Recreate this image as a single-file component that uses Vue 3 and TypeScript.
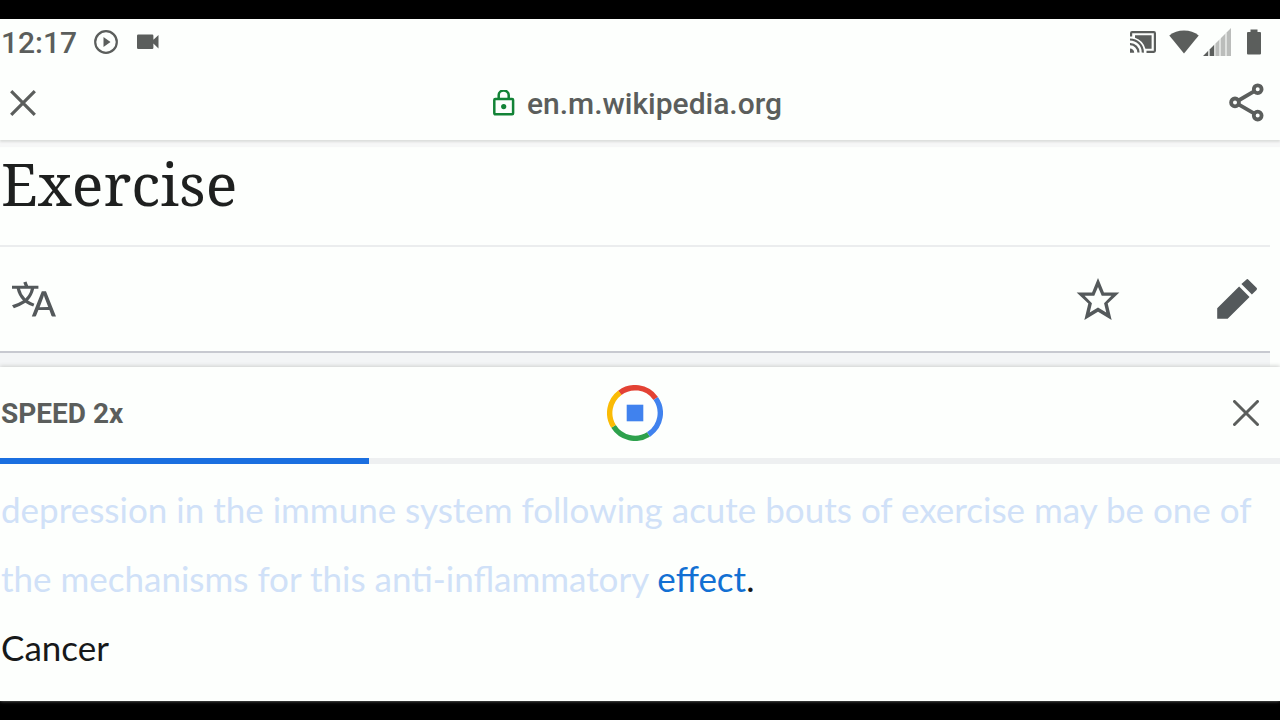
<script setup lang="ts">
import { computed, ref } from 'vue'

interface Arc {
  color: string
  start: number
  length: number
}

const clock = '12:17'
const host = 'en.m.wikipedia.org'
const speeds = [1, 1.5, 2]
const speed = ref(2)
const elapsed = ref(288)
const duration = 1000

const progress = computed(() => (elapsed.value / duration) * 100)

const arcs: Arc[] = [
  { color: '#e34234', start: -127, length: 92 },
  { color: '#4082ee', start: -35, length: 93 },
  { color: '#2da14c', start: 58, length: 90 },
  { color: '#fabb05', start: 148, length: 85 },
]

function nextSpeed() {
  speed.value = speeds[(speeds.indexOf(speed.value) + 1) % speeds.length]
}
</script>

<template>
  <div class="screen">
    <div class="status">
      <span class="clock">{{ clock }}</span>
      <svg class="s-play" width="26" height="26" viewBox="0 0 26 26" aria-hidden="true">
        <circle cx="13" cy="13" r="10.8" fill="none" stroke="currentColor" stroke-width="2.2" />
        <path d="M10.5 8v10l7-5z" fill="currentColor" />
      </svg>
      <svg class="s-cam" width="22" height="16" viewBox="0 0 22 16" aria-hidden="true">
        <path d="M1.2.5h14a1.2 1.2 0 0 1 1.2 1.2v4.1L21.5 1v13.500l-5.100-5v4.300a1.200 1.200 0 0 1-1.200 1.200h-14A1.200 1.200 0 0 1 0 13.800V1.700A1.200 1.200 0 0 1 1.200.5z" fill="currentColor" />
      </svg>
      <span class="grow"></span>
      <svg class="s-cast" width="28" height="24" viewBox="0 0 28 24" aria-hidden="true">
        <g fill="none" stroke="currentColor" stroke-width="2.200">
          <path d="M2.100 6.500V3.200a1 1 0 0 1 1-1h21.800a1 1 0 0 1 1 1v17.600a1 1 0 0 1-1 1H17.500" />
          <path d="M1 9.500A12.800 12.800 0 0 1 13.800 22.600M1 14.200a8.300 8.300 0 0 1 8.500 8.400" />
        </g>
        <path d="M6 5.200h16.600v13.600h-6.200A16 16 0 0 0 6 7.800zM1 18.600a4.200 4.200 0 0 1 4.200 4.200H1z" fill="currentColor" />
      </svg>
      <svg class="s-wifi" width="30" height="24" viewBox="0 0 30 24" aria-hidden="true">
        <path d="M15 23.500.3 5.600Q6.500.500 15 .500t14.700 5.100z" fill="currentColor" />
      </svg>
      <svg class="s-signal" width="28" height="28" viewBox="0 0 28 28" aria-hidden="true">
        <path d="M0 28l5-5v5zM6.500 21.500l4.500-4.500v11H6.500z" fill="currentColor" />
        <path d="M5 23l1.500-1.500V28H5zM11 17l1.500-1.500V28H11z" fill="#d8dad8" />
        <path d="M12.500 15.500l4-4V28h-4zM18 10l4-4v22h-4zM23.500 4.500L28 0v28h-4.500z" fill="#bbbdbb" />
        <path d="M16.500 11.500L18 10v18h-1.500zM22 6l1.500-1.500V28H22z" fill="#dfe1df" />
      </svg>
      <svg class="s-battery" width="14" height="26" viewBox="0 0 14 26" aria-hidden="true">
        <path d="M3.500.5h7V3H13a1 1 0 0 1 1 1v20.500a1 1 0 0 1-1 1H1a1 1 0 0 1-1-1V4a1 1 0 0 1 1-1h2.500z" fill="currentColor" />
      </svg>
    </div>

    <header class="toolbar">
      <button class="icon" type="button" aria-label="Close page">
        <svg width="26" height="26" viewBox="0 0 26 26" aria-hidden="true">
          <path d="M1.200 1.200l23.600 23.600M24.800 1.200L1.200 24.800" fill="none" stroke="currentColor" stroke-width="3.200" />
        </svg>
      </button>
      <div class="address">
        <svg class="lock" width="22" height="28" viewBox="0 0 22 28" aria-hidden="true">
          <g fill="none" stroke="currentColor" stroke-width="2.500">
            <rect x="1.300" y="9" width="18.800" height="15.300" rx="1" />
            <path d="M5.700 9V5a5 4.500 0 0 1 10 0v4" />
          </g>
          <circle cx="10.700" cy="16.600" r="2.600" fill="currentColor" />
        </svg>
        <span>{{ host }}</span>
      </div>
      <button class="icon share" type="button" aria-label="Share">
        <svg width="36" height="40" viewBox="0 0 36 40" aria-hidden="true">
          <g fill="none" stroke="currentColor" stroke-width="3.800">
            <path d="M9.500 17.500L25 8.300M9.500 21.300L25 30.300" />
            <circle cx="6" cy="19.400" r="3.900" />
            <circle cx="28.700" cy="6.200" r="3.900" />
            <circle cx="28.700" cy="32.600" r="3.900" />
          </g>
        </svg>
      </button>
    </header>

    <main class="article">
      <h1>Exercise</h1>
      <nav class="actions" aria-label="Page actions">
        <button class="icon" type="button" aria-label="Read in another language">
          <svg width="44" height="44" viewBox="0 0 20 20" aria-hidden="true">
            <path fill="currentColor" d="M20 18h-1.440a.61.61 0 0 1-.4-.12.8.8 0 0 1-.23-.31L17 15h-5l-1 2.540a.8.8 0 0 1-.22.3.6.6 0 0 1-.4.140H9l4.550-11.470h1.890zm-3.530-4.310L14.890 9.500a12 12 0 0 1-.39-1.240q-.09.37-.19.69l-.19.56-1.580 4.190zm-6.300-1.580a13.400 13.400 0 0 1-2.910-1.410 11.460 11.460 0 0 0 2.810-5.370H12V4H7.310a4 4 0 0 0-.2-.56C6.870 2.790 6.600 2 6.600 2l-1.470.5s.4.89.6 1.500H0v1.330h2.150A11.230 11.230 0 0 0 5 10.700a17.200 17.200 0 0 1-5 2.100q.56.82.87 1.380a23.300 23.300 0 0 0 5.220-2.510 15.600 15.600 0 0 0 3.560 1.770zM3.630 5.330h4.910a8.100 8.100 0 0 1-2.450 4.450 9.100 9.100 0 0 1-2.460-4.450" />
          </svg>
        </button>
        <span class="grow"></span>
        <button class="icon star" type="button" aria-label="Watch this page">
          <svg width="44" height="44" viewBox="0 0 20 20" aria-hidden="true">
            <path fill="currentColor" d="M19.700 7h-7L10 .5 7.300 7h-7l5.300 5-1.800 7.500 6.200-3.700 6.200 3.700-1.800-7.500zM10 13.900l-3.760 2.270 1-4.280L3.900 8.500h4.400L10 4.600l1.700 3.900h4.400l-3.340 3.400 1 4.280z" />
          </svg>
        </button>
        <button class="icon" type="button" aria-label="Edit this page">
          <svg width="44" height="44" viewBox="0 0 20 20" aria-hidden="true">
            <path fill="currentColor" d="m16.770 8 2.100-2.100a.7.7 0 0 0 0-1L15.200 1.200a.7.7 0 0 0-1 0L12 3.230zM1 14.250V19h4.750l9.960-9.960-4.750-4.750z" />
          </svg>
        </button>
      </nav>
      <div class="strip"></div>
    </main>

    <section class="player" aria-label="Read aloud">
      <div class="controls">
        <button class="speed" type="button" @click="nextSpeed">SPEED {{ speed }}x</button>
        <button class="icon" type="button" aria-label="Stop reading">
          <svg width="56" height="56" viewBox="0 0 56 56" aria-hidden="true">
            <circle
              v-for="arc in arcs"
              :key="arc.color"
              cx="28"
              cy="28"
              r="25.300"
              fill="none"
              stroke-width="5.400"
              pathLength="360"
              :stroke="arc.color"
              :stroke-dasharray="`${arc.length} ${360 - arc.length}`"
              :transform="`rotate(${arc.start} 28 28)`"
            />
            <rect x="19.700" y="19.700" width="16.600" height="16.600" fill="#4082ee" />
          </svg>
        </button>
        <div class="end">
          <button class="icon" type="button" aria-label="Close player">
            <svg width="26" height="26" viewBox="0 0 26 26" aria-hidden="true">
              <path d="M1.500 1.500l23 23M24.500 1.500l-23 23" fill="none" stroke="currentColor" stroke-width="3" stroke-linecap="round" />
            </svg>
          </button>
        </div>
      </div>
      <div class="track" role="progressbar" aria-label="Reading progress" :aria-valuenow="progress">
        <div class="fill" :style="{ width: progress + '%' }"></div>
      </div>
      <div class="transcript">
        <p><span class="read">depression in the immune system following acute bouts of exercise may be one of the mechanisms for this anti-inflammatory </span><span class="current">effect</span><span>.</span></p>
        <p>Cancer</p>
      </div>
    </section>
  </div>
</template>

<style>
body {
  margin: 0;
  background: #000;
}
</style>

<style scoped>
.screen {
  box-sizing: border-box;
  min-height: 100vh;
  display: flex;
  flex-direction: column;
  border: solid #000;
  border-width: 19px 0;
  background: #fdfffd;
  color: #5b5e5c;
  font-family: Roboto, "Liberation Sans", sans-serif;
}

button {
  border: 0;
  padding: 0;
  background: none;
  color: inherit;
  font: inherit;
  cursor: pointer;
}

svg {
  display: block;
  flex: none;
}

.icon {
  display: flex;
}

.grow {
  flex: 1;
}

.status {
  display: flex;
  align-items: center;
  height: 46px;
  padding: 0 19px 0 1px;
}

.clock {
  padding-top: 1px;
  font-size: 30px;
  font-weight: 500;
  line-height: 46px;
}

.s-play {
  margin-left: 16px;
}

.s-cam {
  margin-left: 18px;
}

.s-wifi {
  margin-left: 12px;
}

.s-signal {
  margin-left: 4px;
}

.s-battery {
  margin-left: 16px;
}

.toolbar {
  position: relative;
  display: grid;
  grid-template-columns: 1fr auto 1fr;
  align-items: center;
  height: 75px;
  padding: 0 15px 0 10px;
  box-shadow: 0 2px 2px #dcdedc, 0 7px 1px #f6f7f7;
}

.share {
  justify-self: end;
}

.address {
  display: flex;
  align-items: center;
  gap: 12px;
  padding-top: 2px;
  font-size: 30px;
  font-weight: 500;
  line-height: 36px;
}

.lock {
  color: #128336;
}

.article {
  padding-right: 10px;
}

h1 {
  margin: 0;
  padding: 8px 1px 26px;
  border-bottom: 2px solid #ebedee;
  color: #1e201f;
  font-family: "Noto Serif", "DejaVu Serif Condensed", "DejaVu Serif", serif;
  font-size: 59px;
  font-weight: 400;
  line-height: 71px;
}

.actions {
  display: flex;
  align-items: center;
  height: 104px;
  padding: 0 11px 0 12px;
  border-bottom: 2px solid #c7c9d0;
  color: #54595b;
}

.star {
  margin-right: 95px;
}

.strip {
  height: 14px;
  background: #f3f5f6;
}

.player {
  position: relative;
  flex: 1;
  box-shadow: 0 -1px 4px #ced0ce;
  background: #fdfffd;
}

.controls {
  display: grid;
  grid-template-columns: 1fr auto 1fr;
  align-items: center;
  height: 91px;
  padding: 0 10px 0 0;
}

.speed {
  justify-self: start;
  padding: 2px 0 0 1px;
  font-size: 28px;
  font-weight: 700;
  line-height: 36px;
}

.end {
  display: flex;
  justify-content: flex-end;
  padding-right: 11px;
}

.track {
  height: 6px;
  background: #eef0f1;
}

.fill {
  height: 100%;
  background: #1b6fe0;
}

.transcript {
  padding: 11px 1px 0;
  color: #17191a;
  font-family: Lato, "Open Sans", sans-serif;
  font-size: 35px;
  line-height: 69px;
}

.transcript p {
  margin: 0;
}

.read {
  color: #d0e1f8;
}

.current {
  color: #1270d3;
}
</style>
